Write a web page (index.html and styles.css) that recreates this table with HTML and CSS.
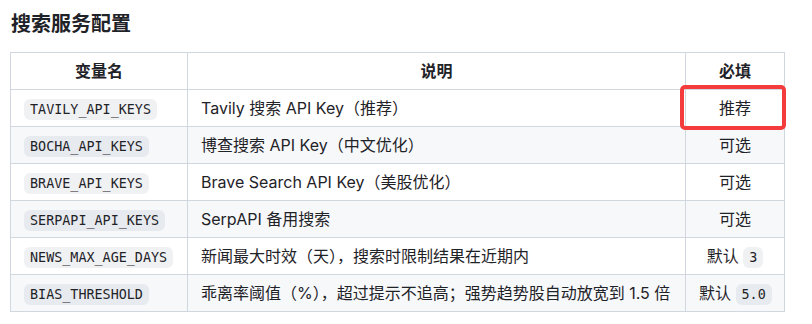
FILE: index.html
```html
<!DOCTYPE html>
<html lang="zh-CN">
<head>
<meta charset="utf-8">
<title>搜索服务配置</title>
<link rel="stylesheet" href="styles.css">
</head>
<body>
<div class="page">
  <h3 class="title">搜索服务配置</h3>
  <div class="table-wrap">
    <table class="cfg">
      <colgroup>
        <col class="c1"><col class="c2"><col class="c3">
      </colgroup>
      <thead>
        <tr><th>变量名</th><th>说明</th><th>必填</th></tr>
      </thead>
      <tbody>
        <tr><td><code>TAVILY_API_KEYS</code></td><td>Tavily 搜索 API Key（推荐）</td><td class="req">推荐</td></tr>
        <tr><td><code>BOCHA_API_KEYS</code></td><td>博查搜索 API Key（中文优化）</td><td class="req">可选</td></tr>
        <tr><td><code>BRAVE_API_KEYS</code></td><td>Brave Search API Key（美股优化）</td><td class="req">可选</td></tr>
        <tr><td><code>SERPAPI_API_KEYS</code></td><td>SerpAPI 备用搜索</td><td class="req">可选</td></tr>
        <tr><td><code>NEWS_MAX_AGE_DAYS</code></td><td>新闻最大时效（天），搜索时限制结果在近期内</td><td class="req">默认 <code>3</code></td></tr>
        <tr><td><code>BIAS_THRESHOLD</code></td><td>乖离率阈值（%），超过提示不追高；强势趋势股自动放宽到 1.5 倍</td><td class="req">默认 <code>5.0</code></td></tr>
      </tbody>
    </table>
    <div class="mark"></div>
  </div>
</div>
</body>
</html>
```

FILE: styles.css
```css
html, body {
  margin: 0;
  padding: 0;
  background: #ffffff;
}
body {
  font-family: "Inter", "Noto Sans CJK SC", sans-serif;
  font-size: 16px;
  line-height: 1.5;
  color: #1f2328;
}
.page {
  padding: 12px 10px 0 10px;
}
.title {
  margin: 0 0 15px 1px;
  font-size: 20px;
  line-height: 25px;
  font-weight: 700;
}
.table-wrap {
  position: relative;
  width: 774px;
}
.cfg {
  border-collapse: collapse;
  border-spacing: 0;
  table-layout: fixed;
  width: 774px;
}
.c1 { width: 177px; }
.c2 { width: 498px; }
.c3 { width: 99px; }
.cfg th, .cfg td {
  border: 1px solid #d0d7de;
  padding: 6px 13px;
  height: 24px;
  white-space: nowrap;
}
.cfg th {
  font-weight: 600;
  text-align: center;
}
.cfg td { text-align: left; }
.cfg td.req { text-align: center; }
.cfg tbody tr:nth-child(2n) { background: #f6f8fa; }
code {
  font-family: "DejaVu Sans Mono", "Liberation Mono", monospace;
  font-size: 13.4px;
  line-height: 1;
  padding: 0.24em 0.45em;
  border-radius: 6px;
  background: rgba(175, 184, 193, 0.2);
}
.mark {
  position: absolute;
  left: 670px;
  top: 33px;
  width: 106px;
  height: 45px;
  box-sizing: border-box;
  border: 4px solid #f43c3c;
  border-radius: 5px;
  pointer-events: none;
}
```
